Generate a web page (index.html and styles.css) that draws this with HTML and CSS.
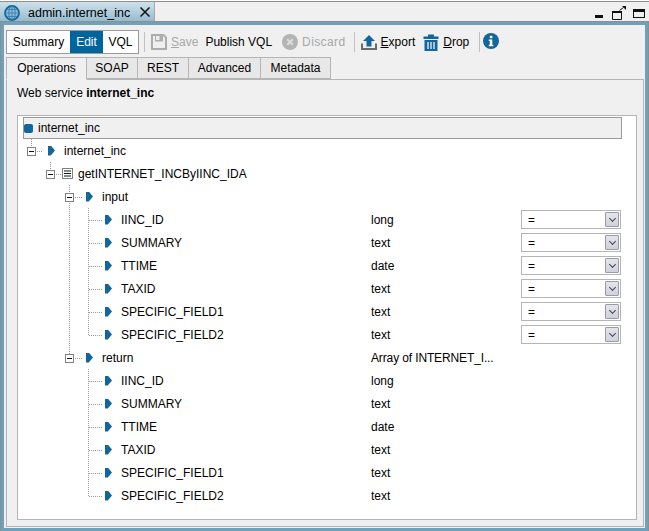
FILE: index.html
```html
<!DOCTYPE html>
<html lang="en">
<head>
<meta charset="utf-8">
<title>admin.internet_inc</title>
<link rel="stylesheet" href="styles.css">
</head>
<body>
<div class="window">
  <div class="strip">
    <div class="doc-tab">
      <svg class="globe" width="16" height="16" viewBox="0 0 16 16"><circle cx="8" cy="8" r="7" fill="#8dbad6" stroke="#12669b" stroke-width="1.800"/><ellipse cx="8" cy="8" rx="3.200" ry="7" fill="none" stroke="#2f7dac" stroke-width=".9"/><path d="M1 8h14M2.500 4.500h11M2.500 11.500h11M8 1v14" stroke="#2f7dac" stroke-width=".8" fill="none"/></svg>
      <span class="doc-title">admin.internet_inc</span>
      <svg class="close" width="10" height="10" viewBox="0 0 10 10"><path d="M.5.5l9 9M9.500.5l-9 9" stroke="#111" stroke-width="1.500"/></svg>
    </div>
    <div class="win-buttons">
      <svg class="win-min" width="8" height="3" viewBox="0 0 8 3"><rect width="8" height="3" fill="#111"/></svg>
      <svg width="14" height="14" viewBox="0 0 14 14"><path d="M.5 5.500h9v8h-9z" fill="none" stroke="#111"/><path d="M0 5h10v2H0z" fill="#111"/><path d="M7.500 4.500l4-3" stroke="#111" fill="none"/><path d="M10 0h4v4z" fill="#111"/></svg>
      <svg class="win-max" width="12" height="9" viewBox="0 0 12 9"><rect x=".5" y=".5" width="11" height="8" fill="none" stroke="#111"/><rect width="12" height="3" fill="#111"/></svg>
    </div>
  </div>
  <div class="frame">
    <div class="toolbar">
      <div class="segmented">
        <span class="seg seg-summary">Summary</span><span class="seg seg-edit active">Edit</span><span class="seg seg-vql">VQL</span>
      </div>
      <span class="sep sep-a"></span>
      <span class="tool disabled tool-save">
        <svg width="16" height="16" viewBox="0 0 16 16"><path d="M1 1h11.500L15 3.500V15H1z" fill="#efefef" stroke="#adadad" stroke-width="2"/><rect x="4" y="1" width="8" height="6.500" fill="#adadad"/><rect x="5" y="2" width="3.500" height="4" fill="#efefef"/></svg>
        <span><u>S</u>ave</span>
      </span>
      <span class="tool tool-publish">Publish VQL</span>
      <span class="tool disabled tool-discard">
        <svg width="16" height="16" viewBox="0 0 16 16"><circle cx="8" cy="8" r="8" fill="#b4b4b4"/><path d="M5.200 5.200l5.600 5.600M10.800 5.200l-5.600 5.600" stroke="#dcdcdc" stroke-width="2"/></svg>
        <span class="discard-label">Discard</span>
      </span>
      <span class="sep sep-b"></span>
      <span class="tool tool-export">
        <svg width="16" height="16" viewBox="0 0 16 16"><path d="M8 1l6 6h-3.500v5.500h-5V7H2z" fill="#12669b"/><path d="M1 9.500V15h14V9.500" fill="none" stroke="#6b6b6b" stroke-width="2"/></svg>
        <span><u>E</u>xport</span>
      </span>
      <span class="tool tool-drop">
        <svg width="16" height="17" viewBox="0 0 16 17"><path d="M.5 2.500h15V5H.5zM5 .5h6v2H5z" fill="#12669b"/><path d="M1.500 6h13v11h-13z" fill="#12669b"/><path d="M5 8v7M8 8v7M11 8v7" stroke="#fff" stroke-width="1.200"/></svg>
        <span><u>D</u>rop</span>
      </span>
      <span class="sep sep-c"></span>
      <svg class="info" width="16" height="16" viewBox="0 0 16 16"><circle cx="8" cy="8" r="8" fill="#12669b"/><rect x="6.800" y="2.800" width="2.500" height="2.400" fill="#fff"/><path d="M5.800 6.500h3.500v5.200h1v1.500H5.800v-1.500h1V8h-1z" fill="#fff"/></svg>
    </div>
    <div class="tabs">
      <span class="tab tab-operations active">Operations</span>
      <span class="tab tab-soap">SOAP</span>
      <span class="tab tab-rest">REST</span>
      <span class="tab tab-advanced">Advanced</span>
      <span class="tab tab-metadata">Metadata</span>
    </div>
    <div class="panel">
      <p class="heading">Web service <b>internet_inc</b></p>
      <div class="tree">
        <svg class="guides" width="120" height="404" viewBox="0 0 120 404">
          <g stroke="#999" stroke-dasharray="1 1" fill="none">
            <path d="M13.500 23v8M19 35.500h6"/>
            <path d="M32.500 46v8M38 58.500h6"/>
            <path d="M51.500 69v173M57 81.500h7M57 242.500h7"/>
            <path d="M70.500 92v127M71 104.500h13M71 127.500h13M71 150.500h13M71 173.500h13M71 196.500h13M71 219.500h13"/>
            <path d="M70.500 253v127M71 265.500h13M71 288.500h13M71 311.500h13M71 334.500h13M71 357.500h13M71 380.500h13"/>
          </g>
          <g fill="#fff" stroke="#808080">
            <rect x="9.500" y="31.500" width="8" height="8"/>
            <rect x="28.500" y="54.500" width="8" height="8"/>
            <rect x="47.500" y="77.500" width="8" height="8"/>
            <rect x="47.500" y="238.500" width="8" height="8"/>
          </g>
          <path d="M11 35.500h5M30 58.500h5M49 81.500h5M49 242.500h5" stroke="#111"/>
        </svg>
        <div class="root-row"><span class="root-dot"></span><span>internet_inc</span></div>
        <div class="row lvl-1"><i class="arrow"></i><span class="name">internet_inc</span></div>
        <div class="row lvl-2"><svg class="op" width="11" height="11" viewBox="0 0 11 11"><rect x=".5" y=".5" width="10" height="10" fill="#fff" stroke="#808080"/><path d="M2 3h7M2 5.500h7M2 8h7" stroke="#111"/></svg><span class="name">getINTERNET_INCByIINC_IDA</span></div>
        <div class="row lvl-3"><i class="arrow"></i><span class="name">input</span></div>
        <div class="row lvl-4"><i class="arrow"></i><span class="name">IINC_ID</span><span class="type">long</span><span class="select"><span>=</span><i class="drop-btn"></i></span></div>
        <div class="row lvl-4"><i class="arrow"></i><span class="name">SUMMARY</span><span class="type">text</span><span class="select"><span>=</span><i class="drop-btn"></i></span></div>
        <div class="row lvl-4"><i class="arrow"></i><span class="name">TTIME</span><span class="type">date</span><span class="select"><span>=</span><i class="drop-btn"></i></span></div>
        <div class="row lvl-4"><i class="arrow"></i><span class="name">TAXID</span><span class="type">text</span><span class="select"><span>=</span><i class="drop-btn"></i></span></div>
        <div class="row lvl-4"><i class="arrow"></i><span class="name">SPECIFIC_FIELD1</span><span class="type">text</span><span class="select"><span>=</span><i class="drop-btn"></i></span></div>
        <div class="row lvl-4"><i class="arrow"></i><span class="name">SPECIFIC_FIELD2</span><span class="type">text</span><span class="select"><span>=</span><i class="drop-btn"></i></span></div>
        <div class="row lvl-3"><i class="arrow"></i><span class="name">return</span><span class="type type-cut">Array of INTERNET_I...</span></div>
        <div class="row lvl-4"><i class="arrow"></i><span class="name">IINC_ID</span><span class="type">long</span></div>
        <div class="row lvl-4"><i class="arrow"></i><span class="name">SUMMARY</span><span class="type">text</span></div>
        <div class="row lvl-4"><i class="arrow"></i><span class="name">TTIME</span><span class="type">date</span></div>
        <div class="row lvl-4"><i class="arrow"></i><span class="name">TAXID</span><span class="type">text</span></div>
        <div class="row lvl-4"><i class="arrow"></i><span class="name">SPECIFIC_FIELD1</span><span class="type">text</span></div>
        <div class="row lvl-4"><i class="arrow"></i><span class="name">SPECIFIC_FIELD2</span><span class="type">text</span></div>
      </div>
    </div>
  </div>
</div>
</body>
</html>
```
FILE: styles.css
```css
* { box-sizing: border-box; }
html, body { margin: 0; height: 100%; }
body {
  background: #fff;
  font-family: "Liberation Sans", Arial, sans-serif;
  font-size: 12px;
  color: #000;
  overflow: hidden;
}
.window {
  width: 649px;
  height: 531px;
  padding-top: 1px;
  background: #f0f0f0;
  border-top: 1px solid #fff;
  display: flex;
  flex-direction: column;
}
.strip {
  height: 21px;
  flex: none;
  border-top: 1px solid #8e8e8e;
  display: flex;
  justify-content: space-between;
  margin-top: -1px;
}
.doc-tab {
  width: 155px;
  height: 21px;
  display: flex;
  align-items: center;
  padding: 0 0 0 4px;
  background: linear-gradient(#cfe1ea, #8fb8cd);
  border-right: 1px solid #a9a9a9;
}
.globe { flex: none; }
.doc-title { margin-left: 8px; width: 112px; font-size: 12.5px; flex: none; }
.close { flex: none; margin-top: -1px; }
.win-buttons {
  display: flex;
  align-items: flex-end;
  padding: 0 4px 2px 0;
}
.win-min { margin: 0 9px 2px 0; }
.win-max { margin: 0 0 2px 7px; }
.frame {
  flex: 1;
  border: solid #6ea2bc;
  border-width: 3px;
  outline: 1px solid #8e8e8e;
  outline-offset: 0;
  margin: 0 0 0 1px;
  width: 647px;
  height: 507px;
  display: flex;
  flex-direction: column;
  padding: 0 1px 1px 2px;
}
.toolbar {
  height: 31px;
  flex: none;
  display: flex;
  align-items: center;
  padding-top: 3px;
  margin-left: 0;
}
.segmented {
  width: 133px;
  height: 24px;
  border: 1px solid #9a9a9a;
  background: #fff;
  display: flex;
  align-items: stretch;
}
.seg { display: flex; align-items: center; justify-content: center; }
.seg-summary { width: 63px; }
.seg-edit { width: 33px; }
.seg-vql { width: 35px; }
.seg.active { background: #00659d; color: #fff; }
.sep { width: 1px; height: 20px; background: #c0c0c0; flex: none; }
.sep-a { margin: 0 6px 0 5px; }
.sep-b { margin: 0 6px 0 8px; }
.sep-c { margin: 0 3px 0 10px; }
.tool { display: flex; align-items: center; gap: 4px; flex: none; }
.tool svg { flex: none; }
.tool.disabled { color: #a8a8a8; }
.discard-label { letter-spacing: .4px; }
.tool-publish { margin-left: 7px; margin-right: 10px; }
.tool-drop { margin-left: 8px; }
.info { flex: none; margin-top: -3px; }
.tabs {
  height: 22px;
  flex: none;
  margin-top: 1px;
  display: flex;
  align-items: stretch;
  position: relative;
  z-index: 1;
}
.tab {
  border: 1px solid #b5b5b5;
  border-left-width: 0;
  background: #e8e8e8;
  display: flex;
  align-items: center;
  justify-content: center;
  height: 22px;
}
.tab.active {
  border-left-width: 1px;
  border-bottom-color: #f0f0f0;
  background: #f0f0f0;
  height: 23px;
  padding-bottom: 1px;
}
.tab-operations { width: 81px; }
.tab-soap { width: 51px; }
.tab-rest { width: 51px; }
.tab-advanced { width: 72px; }
.tab-metadata { width: 70px; }
.panel {
  flex: 1;
  border: 1px solid #b5b5b5;
  padding: 0 6px 6px 10px;
  display: flex;
  flex-direction: column;
}
.heading { margin: 0; height: 35px; line-height: 26px; flex: none; }
.tree {
  flex: 1;
  position: relative;
  background: #fff;
  border: 1px solid #b5b5b5;
  padding: 1px 14px 0 5px;
}
.guides { position: absolute; left: 0; top: 0; }
.root-row {
  height: 22px;
  border: 1px solid #9a9a9a;
  background: #f0f0f0;
  display: flex;
  align-items: center;
  gap: 5px;
  padding-left: 0;
  position: relative;
}
.root-dot { width: 9px; height: 9px; border-radius: 2px; background: #12669b; }
.row {
  height: 23px;
  display: flex;
  align-items: center;
  position: relative;
}
.lvl-1 { padding-left: 25px; }
.lvl-2 { padding-left: 39px; }
.lvl-3 { padding-left: 63px; }
.lvl-4 { padding-left: 82px; }
.arrow {
  width: 7px;
  height: 10px;
  flex: none;
  background: #12669b;
  clip-path: polygon(0 0, 40% 0, 100% 50%, 40% 100%, 0 100%);
  margin-right: 9px;
}
.op { flex: none; margin-right: 5px; }
.name { flex: none; }
.lvl-3 .name { width: 269px; }
.lvl-4 .name { width: 250px; }
.type { width: 150px; flex: none; }
.type-cut { letter-spacing: -.13px; }
.select {
  width: 100px;
  height: 19px;
  border: 1px solid #b5b5b5;
  background: #fff;
  display: flex;
  align-items: center;
  justify-content: space-between;
  padding: 0 1px 0 6px;
}
.drop-btn {
  width: 14px;
  height: 15px;
  border: 1px solid #9a9aa8;
  border-radius: 1px;
  background: linear-gradient(#e4e5ec, #cfd1dc);
  display: flex;
  justify-content: center;
}
.drop-btn::before {
  content: "";
  width: 4px;
  height: 4px;
  margin-top: 3px;
  border: solid #444;
  border-width: 0 1.500px 1.500px 0;
  box-sizing: content-box;
  transform: rotate(45deg);
}
```
